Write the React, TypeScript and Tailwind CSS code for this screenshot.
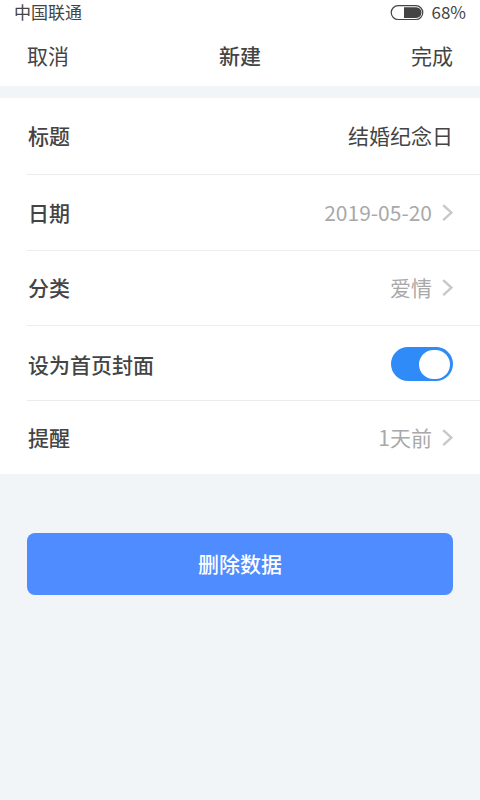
import { useState } from "react";
import type { ReactNode } from "react";

function Battery() {
  return (
    <svg width="34" height="16" viewBox="0 0 34 16" fill="none" aria-hidden="true">
      <rect x="1.2" y="0.7" width="31.6" height="13.8" rx="6.9" stroke="#444444" strokeWidth="1.2" />
      <path d="M14 2.3H26.2a5.3 5.3 0 0 1 0 10.6H14Z" fill="#444444" />
    </svg>
  );
}

function Chevron() {
  return (
    <svg width="11" height="18" viewBox="0 0 11 18" fill="none" aria-hidden="true">
      <path d="M1.2 1.2 9.4 8.7 1.2 16.2" stroke="#c8c8c8" strokeWidth="2.4" />
    </svg>
  );
}

function Row({ children, className }: { children: ReactNode; className: string }) {
  return (
    <li className={`flex border-[#ececec] not-last:border-b ${className}`}>{children}</li>
  );
}

function PickerRow({ label, value, className }: { label: string; value: string; className: string }) {
  return (
    <Row className={className}>
      <button type="button" className="flex flex-1 items-center justify-between pr-[27px] pl-px">
        <span className="pb-[2px] font-medium">{label}</span>
        <span className="flex items-center gap-[10px] text-[#a9a9a9]">
          <span className="pb-[2px]">{value}</span>
          <Chevron />
        </span>
      </button>
    </Row>
  );
}

export default function App() {
  const [title, setTitle] = useState("结婚纪念日");
  const [cover, setCover] = useState(true);

  return (
    <div className="min-h-screen bg-[#f1f5f8] font-['Noto_Sans_CJK_SC',sans-serif] text-[21px] leading-8 text-[#444444]">
      <div className="bg-white">
        <div className="flex h-[26px] items-center justify-between px-[14px] text-[17px] leading-6">
          <span className="pb-[2px]">中国联通</span>
          <span className="flex items-center gap-[7px]">
            <Battery />
            <span className="pb-[2px]">68%</span>
          </span>
        </div>
        <header className="grid h-[60px] grid-cols-3 items-center px-[27px] pb-[2px]">
          <button type="button" className="justify-self-start">取消</button>
          <h1 className="text-center font-medium">新建</h1>
          <button type="button" className="justify-self-end">完成</button>
        </header>
      </div>

      <main className="pt-3">
        <ul className="bg-white pl-[27px]">
          <Row className="h-[77px]">
            <div className="flex flex-1 items-center pr-[27px] pb-[2px] pl-px">
              <label htmlFor="title" className="shrink-0 font-medium">标题</label>
              <input
                id="title"
                type="text"
                value={title}
                onChange={(e) => setTitle(e.target.value)}
                className="min-w-0 flex-1 bg-transparent text-right outline-none"
              />
            </div>
          </Row>
          <PickerRow label="日期" value="2019-05-20" className="h-[76px]" />
          <PickerRow label="分类" value="爱情" className="h-[75px]" />
          <Row className="h-[75px]">
            <label className="flex flex-1 cursor-pointer items-center justify-between pt-[2px] pr-[27px] pl-px">
              <span className="font-medium">设为首页封面</span>
              <input
                type="checkbox"
                role="switch"
                checked={cover}
                onChange={(e) => setCover(e.target.checked)}
                className="flex h-[34px] w-[62px] cursor-pointer appearance-none items-center rounded-full bg-[#d5d9de] px-[3px] before:h-[29px] before:w-[31px] before:rounded-full before:bg-white checked:justify-end checked:bg-[#2f8bf7]"
              />
            </label>
          </Row>
          <PickerRow label="提醒" value="1天前" className="h-[73px]" />
        </ul>

        <div className="px-[27px] pt-[59px]">
          <button
            type="button"
            className="h-[62px] w-full rounded-lg bg-[#4e8cff] pb-[2px] font-medium text-white"
          >
            删除数据
          </button>
        </div>
      </main>
    </div>
  );
}
